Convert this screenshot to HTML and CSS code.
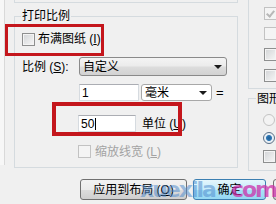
FILE: index.html
```html
<!DOCTYPE html>
<html>
<head>
<meta charset="utf-8">
<link rel="stylesheet" href="styles.css">
</head>
<body>
<div class="dialog">
  <div class="main">
    <div class="side"></div>
    <div class="center">
      <div class="prev-group"></div>
      <div class="group scale">
        <div class="legend">打印比例</div>
        <div class="row r1"><span class="cb"></span><span class="lbl">布满图纸 (<u>I</u>)</span></div>
        <div class="row r2"><span class="lbl key">比例 (<u>S</u>):</span><div class="combo wide"><span class="ctext">自定义</span><i class="arrow"></i></div></div>
        <div class="row r3"><div class="input in1">1</div><div class="combo unit"><span class="ctext">毫米</span><i class="arrow"></i></div><span class="eq">=</span></div>
        <div class="row r4"><div class="input in2">50<span class="caret"></span></div><span class="lbl">单位 (<u>U</u>)</span></div>
        <div class="row r5"><span class="cb off"></span><span class="lbl gray">缩放线宽 (<u>L</u>)</span></div>
      </div>
    </div>
    <div class="right">
      <div class="group opts">
        <span class="cb off checked"></span>
        <span class="cb off"></span>
        <span class="cb"></span>
        <span class="cb"></span>
      </div>
      <div class="group orient">
        <div class="legend">图形方向</div>
        <span class="radio off"></span>
        <span class="radio on"></span>
        <span class="cb"></span>
      </div>
    </div>
  </div>
  <div class="buttons">
    <div class="btn b1">应用到布局 (<u>O</u>)</div>
    <div class="btn b2">确定</div>
    <div class="btn b3"></div>
  </div>
</div>
<div class="mark m1"></div>
<div class="mark m2"></div>
<div class="watermark"><span class="wm-blue">xuexila</span><span class="wm-pink">com</span></div>
</body>
</html>
```
FILE: styles.css
```css
html, body {
  margin: 0;
  padding: 0;
}
body {
  width: 276px;
  height: 204px;
  overflow: hidden;
  position: relative;
  background: #f0f0f0;
  font-family: "Liberation Sans", "Noto Sans CJK SC", sans-serif;
  font-size: 12px;
  line-height: 14px;
  color: #000;
}
u { text-decoration: underline; }
.dialog { width: 276px; overflow: hidden; }
.main {
  display: flex;
  align-items: flex-start;
  height: 171px;
}
.side {
  width: 4px;
  height: 165px;
  background: #f7f7f7;
  border-right: 1px solid #d9d9d9;
  flex: none;
}
.center {
  margin-left: 9px;
  width: 224px;
  flex: none;
}
.prev-group {
  height: 2px;
  border: 1px solid #d5dbdf;
  border-top: none;
}
.group {
  border: 1px solid #d5dbdf;
}
.scale {
  margin-top: 13px;
  padding: 0 0 9px 7px;
}
.legend {
  width: fit-content;
  margin-top: -8px;
  padding: 0 1px;
  margin-left: -1px;
  background: #f0f0f0;
  height: 14px;
  white-space: nowrap;
}
.row {
  display: flex;
  align-items: center;
}
.r1 { margin-top: 9px; height: 14px; }
.r2 { margin-top: 11px; height: 19px; }
.r3 { margin-top: 8px; height: 17px; padding-left: 57px; }
.r4 { margin-top: 14px; height: 17px; padding-left: 56px; }
.r5 { margin-top: 13px; height: 13px; padding-left: 56px; }
.cb {
  display: block;
  width: 11px;
  height: 11px;
  flex: none;
  border: 1px solid #8e8f8f;
  background: linear-gradient(135deg, #d2d4d6, #f7f7f7);
  box-shadow: inset 0 0 0 1px #f4f4f4;
  position: relative;
}
.cb.off {
  border-color: #c2c2c2;
  background: #f4f4f4;
  box-shadow: none;
}
.cb.checked::after {
  content: "";
  position: absolute;
  left: 3px;
  top: 1px;
  width: 3px;
  height: 6px;
  border: solid #b8b8b8;
  border-width: 0 2px 2px 0;
  transform: rotate(40deg);
}
.r1 .lbl { margin-left: 3px; }
.r5 .lbl { margin-left: 4px; }
.key { width: 57px; flex: none; }
.gray { color: #a3a3a3; }
.combo {
  position: relative;
  box-sizing: border-box;
  height: 100%;
  border: 1px solid #8a8a8a;
  border-radius: 3px;
  display: flex;
  align-items: center;
  padding-left: 3px;
}
.combo.wide {
  width: 148px;
  background: linear-gradient(#f4f4f4 0%, #ececec 45%, #dcdcdc 55%, #d2d2d2 100%);
}
.combo.unit {
  width: 71px;
  margin-left: 2px;
  background: #fff;
  border-color: #a8a8a8;
}
.arrow {
  position: absolute;
  right: 4px;
  top: 50%;
  margin-top: -2px;
  width: 0;
  height: 0;
  border-left: 4px solid transparent;
  border-right: 4px solid transparent;
  border-top: 4px solid #1a1a1a;
}
.input {
  box-sizing: border-box;
  height: 100%;
  background: #fff;
  border: 1px solid #d6dbe0;
  border-top-color: #abadb3;
  padding-left: 2px;
  display: flex;
  align-items: center;
}
.in1 { width: 60px; }
.in2 { width: 58px; }
.caret {
  display: inline-block;
  width: 1px;
  height: 12px;
  background: #000;
  margin-left: 1px;
}
.eq { margin-left: 4px; font-size: 13px; }
.r4 .lbl { margin-left: 6px; }
.right {
  margin-left: 10px;
  width: 40px;
  flex: none;
}
.opts {
  border-top: none;
  border-right: none;
  padding: 7px 0 6px 15px;
  display: flex;
  flex-direction: column;
  gap: 7px;
}
.opts .cb:nth-child(3) { margin-top: 1px; }
.opts .cb:nth-child(4) { margin-top: 1px; }
.orient {
  margin-top: 9px;
  border-right: none;
  padding: 0 0 7px 14px;
}
.orient .legend { margin-top: -7px; margin-left: -7px; }
.radio {
  display: block;
  box-sizing: border-box;
  width: 12px;
  height: 12px;
  border-radius: 50%;
  border: 1px solid #c3c3c3;
  background: #f3f3f3;
}
.radio.off { margin-top: 8px; }
.radio.on {
  margin-top: 6px;
  border-color: #5a6f86;
  background: radial-gradient(circle at 50% 50%, #1f5f96 0, #2e77b4 2.5px, #e6eef5 3.5px, #f4f6f8 100%);
}
.orient .cb { margin-top: 6px; }
.buttons {
  display: flex;
  margin-top: 8px;
  padding-left: 80px;
}
.btn {
  flex: none;
  box-sizing: border-box;
  height: 21px;
  border: 1px solid #707070;
  border-radius: 3px;
  background: linear-gradient(#f2f2f2 0%, #ebebeb 50%, #dddddd 51%, #cfcfcf 100%);
  display: flex;
  align-items: center;
  justify-content: center;
  white-space: nowrap;
}
.b1 { width: 107px; }
.b2 {
  width: 73px;
  margin-left: 6px;
  border-color: #3c7fb1;
  background: linear-gradient(#e5f6fc 0%, #c6ecfb 50%, #a8e1f7 51%, #95d8f3 100%);
}
.b3 { width: 75px; margin-left: 7px; }
.mark {
  position: absolute;
  box-sizing: border-box;
  border: 3px solid #c4161c;
}
.m1 { left: 5px; top: 24px; width: 99px; height: 32px; }
.m2 { left: 52px; top: 102px; width: 130px; height: 34px; border-width: 4px; }
.watermark {
  position: absolute;
  left: 140px;
  top: 176px;
  font-family: "DejaVu Sans", sans-serif;
  font-weight: bold;
  font-size: 22px;
  line-height: 28px;
  letter-spacing: -2px;
  white-space: nowrap;
}
.wm-blue { color: rgba(80, 140, 205, 0.55); }
.wm-pink { color: rgba(205, 50, 170, 0.75); margin-left: 16px; }
```
